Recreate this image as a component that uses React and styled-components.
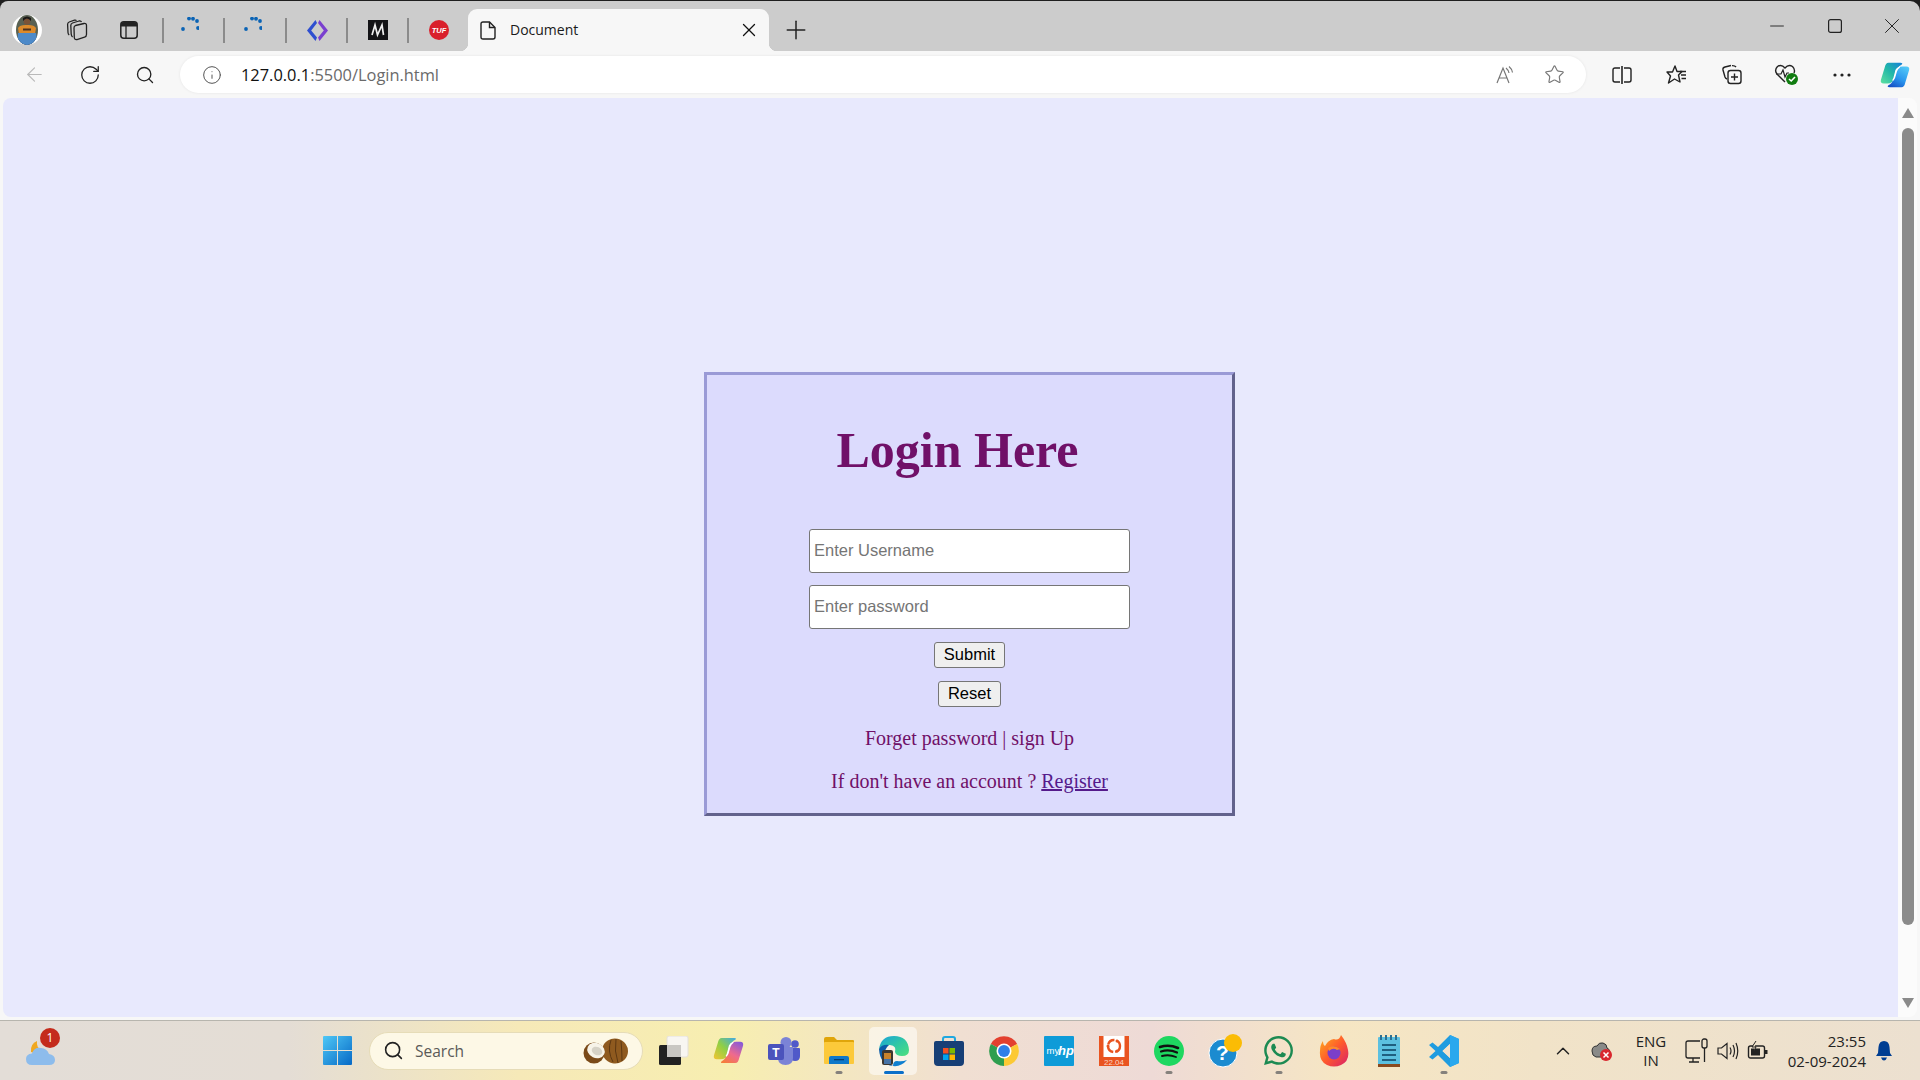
import React from "react";
import styled, { createGlobalStyle } from "styled-components";
import { ArrowLeft, RotateCw, Search, Info, Star, Plus, X, Minus, ChevronUp } from "lucide-react";
import { FaWhatsapp } from "react-icons/fa";

const Global = createGlobalStyle`
  html, body { margin: 0; padding: 0; height: 100%; overflow: hidden; background: #1e1e1e; }
  #root { height: 100%; }
`;
const UI = `"Open Sans", "Noto Sans", sans-serif`;

const Window = styled.div`display: flex; flex-direction: column; height: 100vh; width: 100%; font-family: ${UI};`;
const TabStrip = styled.header`
  display: flex; height: 50px; margin-top: 1px; padding-top: 8px; box-sizing: border-box;
  background: #cccccc; border-radius: 8px 10px 0 0; flex: none;
`;
const TabSlot = styled.div`
  width: ${p => p.$w}px; flex: none; display: flex; align-items: center; justify-content: center;
`;
const Separator = styled.span`display: block; width: 2px; height: 25px; background: #8b8b8b;`;
const ActiveTab = styled.div`
  position: relative; margin-left: 13px; width: 301px; flex: none; display: flex; align-items: center;
  background: #f7f7f7; border-radius: 9px 9px 0 0; padding: 0 9px 0 12px; box-sizing: border-box; color: #111;
  &::before, &::after { content: ""; position: absolute; bottom: 0; width: 8px; height: 8px; }
  &::before { left: -8px; background: radial-gradient(circle at 0 0, transparent 8px, #f7f7f7 8.5px); }
  &::after { right: -8px; background: radial-gradient(circle at 100% 0, transparent 8px, #f7f7f7 8.5px); }
`;
const TabTitle = styled.span`font-size: 14px; margin-left: 14px; padding-bottom: 2px; flex: 1; color: #1a1a1a;`;
const PlusSlot = styled.div`width: 54px; flex: none; display: flex; align-items: center; justify-content: center; color: #222;`;
const CaptionGroup = styled.div`margin-left: auto; display: flex; height: 34px;`;
const CaptionButton = styled.div`width: ${p => p.$w}px; display: flex; align-items: center; justify-content: center; color: #222;`;
const Toolbar = styled.nav`display: flex; align-items: center; height: 47px; padding-left: 7px; background: #f7f7f7; flex: none;`;
const ToolButton = styled.div`
  width: ${p => p.$w || 55}px; height: 47px; flex: none; display: flex; align-items: center; justify-content: center;
  color: ${p => p.$muted ? "#b9b9b9" : "#222"};
`;
const AddressBar = styled.div`
  width: 1406px; height: 37px; margin: 0 8px 0 8px; flex: none; display: flex; align-items: center; box-sizing: border-box;
  background: #fff; border-radius: 19px; padding: 0 7px 0 22px; box-shadow: 0 0 3px rgba(0,0,0,.08);
`;
const UrlIcon = styled.div`width: 20px; height: 20px; color: #555; display: flex; margin-right: 19px;`;
const Url = styled.div`flex: 1; font-size: 16.4px; color: #6a6a6a; b { font-weight: 400; color: #111; }`;
const AddressAction = styled.div`width: 49px; display: flex; justify-content: center; color: #777;`;
const PageRow = styled.div`flex: 1; display: flex; min-height: 0; padding: 0 3px 3px; background: #f7f7f7;`;
const Page = styled.main`
  flex: 1; background: #e8e9fd; border-radius: 8px 0 0 8px; padding: 274px 0 0 701px; box-sizing: border-box;
  font-family: "Liberation Serif", "Times New Roman", serif;
`;
const LoginCard = styled.section`
  width: 531px; box-sizing: border-box; border: 3px solid; border-color: #9a9ad6 #62628c #62628c #9a9ad6;
  background: #dcdbfd; display: flex; flex-direction: column; align-items: center; padding: 47px 0 20px;
`;
const Title = styled.h1`margin: 0 24px 50px 0; font-size: 50px; line-height: 57px; font-weight: 700; color: #701068;`;
const Field = styled.input`
  width: 321px; height: 44px; box-sizing: border-box; margin-bottom: ${p => p.$mb}px; padding: 0 4px 2px;
  border: 1px solid #767676; border-radius: 3px; background: #fff; outline: none;
  font-family: "Liberation Sans", Arial, sans-serif; font-size: 16.5px;
  &::placeholder { color: #757575; opacity: 1; }
`;
const ActionButton = styled.button`
  height: 26px; width: ${p => p.$w}px; padding: 0 0 2px; margin-bottom: 13px; box-sizing: border-box;
  border: 1px solid #767676; border-radius: 3px; background: #efefef; color: #000;
  font-family: "Liberation Sans", Arial, sans-serif; font-size: 16.5px;
`;
const Note = styled.p`margin: ${p => p.$mt}px 0 0; font-size: 20px; line-height: 23px; color: #701068;`;
const RegisterLink = styled.a`color: #551a8b; text-decoration: underline;`;
const Scrollbar = styled.aside`
  width: 19px; flex: none; background: #fbfbfb; border-radius: 0 8px 8px 0; display: flex; flex-direction: column;
  align-items: center; padding: 10px 0 9px; box-sizing: border-box;
`;
const ArrowUp = styled.span`width: 0; height: 0; border: 6.5px solid transparent; border-top: 0; border-bottom: 10px solid #8a8a8a;`;
const ArrowDown = styled.span`width: 0; height: 0; border: 6.5px solid transparent; border-bottom: 0; border-top: 10px solid #8a8a8a;`;
const Thumb = styled.div`flex: 1; width: 12px; margin: 10px 0 73px; background: #8b8b8b; border-radius: 6px;`;
const Taskbar = styled.footer`
  height: 60px; flex: none; box-sizing: border-box; border-top: 1px solid #b7b5ae; display: flex; align-items: center;
  background: linear-gradient(90deg, #e3ddd7 0%, #e4ddd5 15%, #f6e9b8 27%, #f7eeb0 38%, #f0dfd2 50%, #eedad6 60%, #f6e6c3 70%, #f1e3c8 80%, #ece0d0 100%);
`;
const WeatherSlot = styled.div`width: 310px; flex: none; padding-left: 24px; box-sizing: border-box;`;
const WeatherWrap = styled.div`position: relative; width: 34px; height: 34px;`;
const Badge = styled.span`
  position: absolute; left: 16px; top: -6px; width: 20px; height: 20px; border-radius: 50%; background: #c42b1c; color: #fff;
  font-size: 12px; line-height: 20px; text-align: center;
`;
const TaskSlot = styled.div`
  position: relative; width: 55px; height: 48px; flex: none; display: flex; align-items: center; justify-content: center;
  &[data-active="true"]::before { content: ""; position: absolute; left: 3px; right: 4px; top: 0; bottom: 0; background: rgba(255,255,255,.55); border-radius: 5px; }
  svg { position: relative; }
`;
const RunDot = styled.span`
  position: absolute; left: 50%; bottom: 1px; height: 3px; border-radius: 2px; transform: translateX(-50%);
  width: ${p => p.$active ? 20 : 7}px; background: ${p => p.$active ? "#0b6fc9" : "#85817c"};
`;
const SearchPill = styled.div`
  width: 274px; height: 38px; margin: 0 3px 0 4px; flex: none; box-sizing: border-box; display: flex; align-items: center;
  background: #fdf8e6; border: 1px solid #e6dcb8; border-radius: 19px; padding: 0 13px 0 13px; color: #222;
`;
const SearchText = styled.span`flex: 1; font-size: 15.5px; color: #5a5a58; margin-left: 11px;`;
const Tray = styled.div`margin-left: auto; display: flex; align-items: center; height: 100%; padding-right: 18px; color: #222;`;
const TraySlot = styled.div`width: ${p => p.$w}px; flex: none; display: flex; align-items: center; justify-content: center;`;
const Lang = styled.div`text-align: center; font-size: 15px; line-height: 19px; color: #222;`;
const Clock = styled.div`text-align: right; font-size: 15px; line-height: 20px; color: #222; width: 93px; flex: none;`;

const Avatar = () => (
  <svg width="30" height="30" viewBox="0 0 30 30">
    <defs><clipPath id="av"><ellipse cx="15" cy="15" rx="11" ry="15" /></clipPath></defs>
    <circle cx="15" cy="15" r="15" fill="#fff" />
    <g clipPath="url(#av)">
      <rect width="30" height="30" fill="#596153" />
      <rect y="24" width="30" height="6" fill="#39455a" />
      <circle cx="15" cy="6.5" r="3.3" fill="#7a5236" />
      <path d="M11 6 q4 -5 8 0 l0 -3 q-4 -3 -8 0z" fill="#1b1817" />
      <path d="M7 19 L6 13 Q8 9.5 15 10 Q22 9.5 24 13 L23 19 Z" fill="#dc8a2b" />
      <path d="M6 18 H24 L26 30 H5Z" fill="#4d8ac9" />
      <rect x="11" y="13.5" width="8" height="2" fill="#4a3020" />
    </g>
  </svg>
);
const StackIcon = () => (
  <svg width="22" height="22" viewBox="0 0 22 22" fill="none" stroke="#222" strokeWidth="1.3">
    <path d="M9.5 6.5 L18 4.5 Q20.5 4.2 20.5 6.5 V15.5 Q20.5 17.5 18.5 18.2 L11 20.5 Q8.5 21 8.3 18.5 L8 9 Q8 7 9.5 6.5Z" />
    <path d="M15.5 3 Q14.8 1.5 13 2 L6.5 4 Q4.7 4.6 4.8 6.5 L5.2 15 Q5.3 17 6.6 18" />
    <path d="M10.5 1.6 Q9.8 .8 8.5 1.2 L3.2 3 Q1.5 3.6 1.6 5.5 L2 13.5 Q2.1 15.2 3.2 16" />
  </svg>
);
const SideTabs = () => (
  <svg width="18" height="18" viewBox="0 0 18 18" fill="none">
    <rect x=".8" y=".8" width="16.4" height="16.4" rx="3" stroke="#222" strokeWidth="1.5" />
    <path d="M1 4 Q1 1 4 1 H14 Q17 1 17 4 V5.5 H1Z" fill="#222" />
    <path d="M6 5 V17" stroke="#222" strokeWidth="1.3" />
  </svg>
);
const Dots = () => (
  <svg width="18" height="26" viewBox="0 0 18 26" fill="#0a63b5">
    <circle cx="2" cy="12" r="1.9" /><circle cx="17" cy="11" r="1.9" /><circle cx="16" cy="4" r="1.9" />
    <circle cx="12" cy="1.8" r="1.9" /><circle cx="8" cy="1.6" r="1.9" />
  </svg>
);
const CodeLogo = () => (
  <svg width="21" height="21" viewBox="0 0 21 21">
    <path d="M8.5 0 L10 3 L4.2 10.5 L10 17.5 L8.5 21 L0 10.5Z" fill="#2f4fd0" />
    <path d="M12.5 0 L21 10.5 L12.5 21 L11 17.5 L16.8 10.5 L11 3Z" fill="#7a3fcf" />
  </svg>
);
const MLogo = () => (
  <svg width="20" height="20" viewBox="0 0 20 20">
    <rect width="20" height="20" fill="#131316" />
    <path d="M4 15 L7 5 L9.5 15 L14 5 L15.5 15" fill="none" stroke="#eee" strokeWidth="1.7" />
  </svg>
);
const TufLogo = () => (
  <svg width="20" height="20" viewBox="0 0 20 20">
    <circle cx="10" cy="10" r="10" fill="#d9202c" />
    <text x="10" y="12.5" textAnchor="middle" fontFamily="Liberation Sans" fontSize="7.5" fontWeight="700" fontStyle="italic" fill="#fff">TUF</text>
  </svg>
);
const FileIcon = () => (
  <svg width="16" height="19" viewBox="0 0 16 19" fill="none" stroke="#222" strokeWidth="1.4">
    <path d="M3 1 H9.5 L15 6.5 V16 Q15 18 13 18 H3 Q1 18 1 16 V3 Q1 1 3 1Z" />
    <path d="M9.5 1 V6.5 H15" />
  </svg>
);
const ReadAloud = () => (
  <svg width="20" height="20" viewBox="0 0 20 20" fill="none" stroke="#777" strokeWidth="1.2">
    <path d="M1 18 L7 3 L13 18 M3.2 13 H11" />
    <path d="M10 3 Q12.5 5 13 8 M13 1.5 Q16 4 16.5 7.5" />
  </svg>
);
const SplitIcon = () => (
  <svg width="20" height="20" viewBox="0 0 20 20" fill="none" stroke="#222" strokeWidth="1.4">
    <path d="M8 3 H3 Q1 3 1 5 V15 Q1 17 3 17 H8 M12 3 H17 Q19 3 19 5 V15 Q19 17 17 17 H12" />
    <path d="M10 1 V19" strokeWidth="1.6" />
  </svg>
);
const FavIcon = () => (
  <svg width="21" height="20" viewBox="0 0 21 20" fill="none" stroke="#222" strokeWidth="1.4">
    <path d="M9 1 L11 6.5 H16 L12.5 10 L14 17 L8.5 14 L2.5 18 L4.5 11 L1 7 H6.5Z" strokeLinejoin="round" />
    <path d="M14 6.5 H20 M15 10 H20 M15.5 13.5 H20" />
  </svg>
);
const CollectionsIcon = () => (
  <svg width="21" height="21" viewBox="0 0 21 21" fill="none" stroke="#222" strokeWidth="1.4">
    <path d="M10 1.5 L4 3 Q1.5 3.6 2 6 L4 13 Q4.5 14.5 6 15" />
    <path d="M15 3 Q14 1.5 11 1.6" />
    <rect x="7" y="6.5" width="13" height="13" rx="2.5" />
    <path d="M13.5 9.5 V16.5 M10 13 H17" />
  </svg>
);
const HeartIcon = () => (
  <svg width="26" height="24" viewBox="0 0 26 24">
    <path d="M11 19 L3 11 Q0 7 3.5 3.5 Q7.5 1 11 5 Q14.5 1 18.5 3.5 Q21.5 6.5 20 10" fill="none" stroke="#222" strokeWidth="1.4" />
    <path d="M2 11 H7 L9 7 L11 14 L13 10 H15" fill="none" stroke="#222" strokeWidth="1.2" />
    <circle cx="18" cy="16" r="6" fill="#107c10" />
    <path d="M15 16 L17.2 18 L21 14" fill="none" stroke="#fff" strokeWidth="1.6" />
  </svg>
);
const MoreIcon = () => (
  <svg width="18" height="4" viewBox="0 0 18 4" fill="#222"><circle cx="2" cy="2" r="1.6" /><circle cx="9" cy="2" r="1.6" /><circle cx="16" cy="2" r="1.6" /></svg>
);
const CopilotIcon = ({ id, size, rainbow }) => (
  <svg width={size} height={size} viewBox="0 0 32 32">
    <defs>
      <linearGradient id={`${id}a`} x1="0" y1="1" x2="1" y2="0">
        <stop offset="0" stopColor={rainbow ? "#f4c430" : "#5fe0a0"} />
        <stop offset=".5" stopColor={rainbow ? "#8fcf45" : "#22b8a8"} />
        <stop offset="1" stopColor={rainbow ? "#3fa8e8" : "#1580d8"} />
      </linearGradient>
      <linearGradient id={`${id}b`} x1=".8" y1="0" x2=".2" y2="1">
        <stop offset="0" stopColor={rainbow ? "#8a5bd6" : "#52c8f7"} />
        <stop offset=".55" stopColor={rainbow ? "#ef6a8e" : "#2a96ee"} />
        <stop offset="1" stopColor={rainbow ? "#f57c3b" : "#1650c5"} />
      </linearGradient>
    </defs>
    <path d="M9 3 H22 Q25 3 23 5 Q19 7 18 11 L15.5 20 Q13 25 8 25 H4 Q0 25 1 21 L5 8 Q6 3 9 3Z" fill={`url(#${id}a)`} />
    <path d="M23 29 H10 Q7 29 9 27 Q13 25 14 21 L16.5 12 Q19 7 24 7 H28 Q32 7 31 11 L27 24 Q26 29 23 29Z" fill={`url(#${id}b)`} />
    <path d="M21 7.5 Q18.5 9 17.5 12 L15.5 19 Q14.5 21 13.5 22 Q15 20 15.5 17 L17 11 Q18 8.5 21 7.5Z" fill="#fff" stroke="#fff" strokeWidth="1.2" />
  </svg>
);
const WeatherIcon = () => (
  <svg width="34" height="34" viewBox="0 0 34 34">
    <path d="M13 7 Q6 10 7 18 Q12 20 18 16 Q12 14 13 7Z" fill="#f0a820" />
    <path d="M8 31 Q2 31 2 25 Q2 20 8 19.5 Q10 13 17 14 Q23 14.5 25 20 Q31 21 31 26 Q31 31 25 31Z" fill="#8dbcec" />
  </svg>
);
const WinLogo = () => (
  <svg width="29" height="29" viewBox="0 0 29 29">
    <defs><linearGradient id="win" x1="0" y1="0" x2="1" y2="1"><stop offset="0" stopColor="#4fc8f6" /><stop offset="1" stopColor="#0669c6" /></linearGradient></defs>
    <path d="M0 1 Q0 0 1 0 H14 V14 H0Z M15 0 H28 Q29 0 29 1 V14 H15Z M0 15 H14 V29 H1 Q0 29 0 28Z M15 15 H29 V28 Q29 29 28 29 H15Z" fill="url(#win)" />
  </svg>
);
const Coconut = () => (
  <svg width="46" height="26" viewBox="0 0 46 26">
    <ellipse cx="32" cy="13" rx="13" ry="12.5" fill="#8f5a1f" transform="rotate(12 32 13)" />
    <path d="M28 2 Q24 13 30 24 M33 1 Q31 13 35 25 M38 3 Q39 13 39 23" stroke="#5e3812" fill="none" strokeWidth="1" />
    <circle cx="11" cy="15" r="10.5" fill="#7a4a18" />
    <ellipse cx="13" cy="12.5" rx="9" ry="7.5" fill="#f7f3e8" transform="rotate(25 13 12.5)" />
    <ellipse cx="14" cy="13" rx="5.5" ry="4" fill="#d6d2c6" transform="rotate(25 14 13)" />
  </svg>
);
const TaskView = () => (
  <svg width="30" height="29" viewBox="0 0 30 29">
    <rect x="8" y="0" width="21" height="21" rx="2" fill="#f8f6f2" stroke="#e4e0da" />
    <rect x="0" y="9" width="22" height="20" rx="1.5" fill="#222" />
    <rect x="8" y="9" width="14" height="12" fill="#c9c7c3" />
  </svg>
);
const Teams = () => (
  <svg width="32" height="28" viewBox="0 0 32 28">
    <circle cx="18" cy="5.5" r="5.5" fill="#7b83d6" />
    <circle cx="27" cy="7" r="3.8" fill="#5059c9" />
    <path d="M22 11 H31 Q32 11 32 12 V19 Q32 24 27 24 Q23 24 22 21Z" fill="#5059c9" />
    <path d="M10 10 H25 V21 Q25 28 17.5 28 Q10 28 10 21Z" fill="#7b83d6" />
    <rect x="0" y="7" width="16" height="16" rx="2" fill="#4b53bc" />
    <text x="8" y="19.5" textAnchor="middle" fontFamily="Liberation Sans" fontWeight="700" fontSize="12" fill="#fff">T</text>
  </svg>
);
const Explorer = () => (
  <svg width="30" height="27" viewBox="0 0 30 27">
    <path d="M0 2 Q0 0 2 0 H10 L13 3 H29 Q30 3 30 4 V10 H0Z" fill="#e0a50a" />
    <rect x="0" y="5" width="30" height="22" rx="1" fill="#fcc93a" />
    <path d="M5 27 V21 Q5 19 7 19 H23 Q25 19 25 21 V27Z" fill="#0f78c9" />
    <rect x="10" y="22" width="10" height="1.3" fill="#073f72" />
  </svg>
);
const Edge = () => (
  <svg width="32" height="32" viewBox="0 0 32 32">
    <defs>
      <linearGradient id="edg" x1="0" y1="0" x2="1" y2="1"><stop offset="0" stopColor="#1aa0dd" /><stop offset=".5" stopColor="#2fc7a5" /><stop offset="1" stopColor="#4ee07e" /></linearGradient>
    </defs>
    <path d="M1 14 Q3 1 16 1 Q30 1 31 15 Q31 21 24 21 Q18 21 17 17 Q19 11 12 10 Q4 10 1 14Z" fill="url(#edg)" />
    <path d="M1 14 Q4 9 11 10 Q6 14 7 21 Q8 28 15 31 Q2 30 1 14Z" fill="#0c5ba8" />
    <path d="M15 31 Q23 32 29 25 Q24 27 19 26 Q15 26 15 31Z" fill="#0f7fd0" />
    <rect x="4" y="15" width="11" height="15" rx="2" fill="#3b3630" />
    <rect x="6" y="18" width="7" height="6" fill="#c9822b" />
    <rect x="6" y="24" width="7" height="5" fill="#4672a6" />
  </svg>
);
const Store = () => (
  <svg width="30" height="30" viewBox="0 0 30 30">
    <path d="M9 6 V3 Q9 1 11 1 H19 Q21 1 21 3 V6" fill="none" stroke="#1fa8e0" strokeWidth="2" />
    <path d="M0 7 Q0 5 2 5 H28 Q30 5 30 7 V26 Q30 30 26 30 H4 Q0 30 0 26Z" fill="#173f76" />
    <rect x="9" y="12" width="5.5" height="5.5" fill="#f25022" /><rect x="15.5" y="12" width="5.5" height="5.5" fill="#7fba00" />
    <rect x="9" y="18.5" width="5.5" height="5.5" fill="#00a4ef" /><rect x="15.5" y="18.5" width="5.5" height="5.5" fill="#ffb900" />
  </svg>
);
const Chrome = () => (
  <svg width="30" height="30" viewBox="0 0 32 32">
    <path d="M16 16 L2 8.5 A16 16 0 0 1 30 8.5Z" fill="#e3402f" />
    <path d="M16 16 L30 8.5 A16 16 0 0 1 16 32Z" fill="#fcc934" />
    <path d="M16 16 L16 32 A16 16 0 0 1 2 8.5Z" fill="#2f9e4f" />
    <circle cx="16" cy="16" r="8" fill="#fff" /><circle cx="16" cy="16" r="6.3" fill="#2f7fe8" />
  </svg>
);
const MyHp = () => (
  <svg width="30" height="30" viewBox="0 0 30 30">
    <rect width="30" height="30" rx="1" fill="#0e9bd8" />
    <text x="2.5" y="18" fontFamily="Liberation Sans" fontSize="9.5" fill="#fff">my</text>
    <text x="14" y="19" fontFamily="Liberation Sans" fontSize="13" fontWeight="700" fontStyle="italic" fill="#fff">hp</text>
  </svg>
);
const Ubuntu = () => (
  <svg width="30" height="30" viewBox="0 0 30 30">
    <rect width="30" height="30" fill="#e95420" />
    <rect x="4.5" y="0" width="21" height="21" fill="#fff" />
    <circle cx="15" cy="10" r="6" fill="none" stroke="#e95420" strokeWidth="2.4" strokeDasharray="8 2" />
    <circle cx="9" cy="10" r="1.5" fill="#e95420" /><circle cx="18" cy="5" r="1.5" fill="#e95420" /><circle cx="18" cy="15" r="1.5" fill="#e95420" />
    <text x="15" y="28.5" textAnchor="middle" fontFamily="Liberation Sans" fontSize="8" fill="#fbd8c9">22.04</text>
  </svg>
);
const Spotify = () => (
  <svg width="30" height="30" viewBox="0 0 30 30" fill="none" stroke="#111" strokeLinecap="round">
    <circle cx="15" cy="15" r="15" fill="#1ed760" stroke="none" />
    <path d="M6 11 Q15 8 24 12" strokeWidth="2.6" /><path d="M7 15.5 Q15 13 23 16.5" strokeWidth="2.2" /><path d="M8 20 Q15 18 22 21" strokeWidth="1.9" />
  </svg>
);
const Help = () => (
  <svg width="38" height="34" viewBox="-4 0 38 34">
    <circle cx="14" cy="19" r="14" fill="#1b8bd0" stroke="#fff" strokeWidth="1" />
    <text x="13.5" y="26" textAnchor="middle" fontFamily="Liberation Sans" fontWeight="700" fontSize="21" fill="#fff">?</text>
    <circle cx="24" cy="9" r="9" fill="#fbbc05" />
  </svg>
);
const Firefox = () => (
  <svg width="30" height="32" viewBox="0 0 30 32">
    <defs><linearGradient id="ff" x1="0" y1="0" x2="1" y2="1"><stop offset="0" stopColor="#ffb31a" /><stop offset=".5" stopColor="#ff5a2c" /><stop offset="1" stopColor="#d71f6b" /></linearGradient></defs>
    <path d="M15 4 Q20 6 22 0 Q28 8 29 15 Q31 26 22 30 Q15 33 8 30 Q0 26 1 16 Q1 10 4 6 Q4 10 6 11 Q9 5 15 4Z" fill="url(#ff)" />
    <circle cx="15" cy="18" r="6.5" fill="#7a3fc9" /><path d="M9 13 Q15 9 21 14 L18 15 Q14 12 10 16Z" fill="#ff8a2a" />
  </svg>
);
const Notepad = () => (
  <svg width="22" height="32" viewBox="0 0 22 32">
    <rect y="2" width="22" height="30" rx="1" fill="#5cc0e0" />
    <rect y="29" width="22" height="3" fill="#8a4a1e" />
    <g fill="#2a6f92"><rect x="2" y="0" width="2" height="5" /><rect x="7" y="0" width="2" height="5" /><rect x="12" y="0" width="2" height="5" /><rect x="17" y="0" width="2" height="5" /></g>
    <g fill="#1f5f80"><rect x="4" y="9" width="14" height="2" /><rect x="4" y="14" width="14" height="2" /><rect x="4" y="19" width="14" height="2" /><rect x="4" y="24" width="14" height="2" /></g>
  </svg>
);
const VsCode = () => (
  <svg width="30" height="32" viewBox="0 0 30 32">
    <path fillRule="evenodd" d="M21 0 L30 4 V28 L21 32 L9 20 L3.5 24.5 L0 22 L6.5 16 L0 10 L3.5 7.5 L9 12Z M21 9 L13.5 16 L21 23Z" fill="#1f9ce0" />
    <path d="M21 0 L30 4 V28 L21 32Z M21 9 L21 23" fill="#2aa8ee" />
    <path d="M21 9 L13.5 16 L21 23Z" fill="#f3e3cb" />
  </svg>
);
const CloudError = () => (
  <svg width="22" height="22" viewBox="0 0 22 22">
    <path d="M5 17 Q1 16 1 11 Q1 6 6 6 Q8 2 12 3 Q16 4 16 8 Q19 9 19 13 L12 17Z" fill="#8a8a88" stroke="#333" strokeWidth="1" />
    <circle cx="15" cy="15" r="6" fill="#d9272e" />
    <path d="M12.5 12.5 L17.5 17.5 M17.5 12.5 L12.5 17.5" stroke="#fff" strokeWidth="1.5" />
  </svg>
);
const MonitorPlug = () => (
  <svg width="24" height="26" viewBox="0 0 24 26" fill="none" stroke="#222" strokeWidth="1.3">
    <path d="M15 3 H3 Q1 3 1 5 V18 Q1 20 3 20 H15" /><path d="M8 20 V24 M4 24 H14" />
    <rect x="17" y="1" width="5" height="9" rx="2" /><path d="M19.5 10 V24" />
  </svg>
);
const SpeakerIcon = () => (
  <svg width="22" height="20" viewBox="0 0 22 20" fill="none" stroke="#222" strokeWidth="1.2">
    <path d="M1 7 H4.5 L10 2.5 V17.5 L4.5 13 H1Z" /><path d="M13 6.5 Q15 10 13 13.5 M16 4 Q19 10 16 16 M19 2 Q22.5 10 19 18" />
  </svg>
);
const BatteryIcon = () => (
  <svg width="22" height="20" viewBox="0 0 22 20">
    <rect x="1.5" y="5" width="16" height="12" rx="2" fill="none" stroke="#222" strokeWidth="1.4" />
    <rect x="18" y="9" width="2.5" height="4" fill="#222" /><rect x="4" y="7.5" width="9" height="7" fill="#222" />
    <path d="M9 0 L5 6 H9 L7 10" fill="#f1e3c8" stroke="#222" strokeWidth="1" />
  </svg>
);
const BellIcon = () => (
  <svg width="16" height="20" viewBox="0 0 16 20" fill="#003e92">
    <path d="M8 0 Q13 0 13.5 6 L14 12 L16 15 H0 L2 12 L2.5 6 Q3 0 8 0Z" /><path d="M5 16.5 H11 Q10 19.5 8 19.5 Q6 19.5 5 16.5Z" />
  </svg>
);

const pins = [
  { w: 54, el: <Avatar /> }, { w: 46, el: <StackIcon /> }, { w: 58, el: <SideTabs /> }, { w: 10, el: <Separator /> },
  { w: 44, el: <Dots /> }, { w: 24, el: <Separator /> }, { w: 33, el: <Dots /> }, { w: 34, el: <Separator /> },
  { w: 28, el: <CodeLogo /> }, { w: 32, el: <Separator /> }, { w: 30, el: <MLogo /> }, { w: 30, el: <Separator /> }, { w: 32, el: <TufLogo /> },
];
const tasks = [
  { el: <CopilotIcon id="tc" size={31} rainbow /> }, { el: <Teams /> }, { el: <Explorer />, run: true },
  { el: <Edge />, run: true, active: true }, { el: <Store /> }, { el: <Chrome /> }, { el: <MyHp /> }, { el: <Ubuntu /> },
  { el: <Spotify />, run: true }, { el: <Help /> }, { el: <FaWhatsapp size={33} color="#1c8a52" />, run: true },
  { el: <Firefox /> }, { el: <Notepad /> }, { el: <VsCode />, run: true },
];

export default function App() {
  return (
    <Window>
      <Global />
      <TabStrip>
        {pins.map((p, i) => <TabSlot key={i} $w={p.w}>{p.el}</TabSlot>)}
        <ActiveTab>
          <FileIcon />
          <TabTitle>Document</TabTitle>
          <X size={22} strokeWidth={1.4} />
        </ActiveTab>
        <PlusSlot><Plus size={30} strokeWidth={1.2} /></PlusSlot>
        <CaptionGroup>
          <CaptionButton $w={58}><Minus size={22} strokeWidth={1} /></CaptionButton>
          <CaptionButton $w={58}><svg width="14" height="14" viewBox="0 0 14 14" fill="none" stroke="#222" strokeWidth="1.2"><rect x=".6" y=".6" width="12.8" height="12.8" rx="2" /></svg></CaptionButton>
          <CaptionButton $w={56}><X size={26} strokeWidth={.9} /></CaptionButton>
        </CaptionGroup>
      </TabStrip>
      <Toolbar>
        <ToolButton $muted><ArrowLeft size={23} strokeWidth={1.2} /></ToolButton>
        <ToolButton><RotateCw size={22} strokeWidth={1.4} /></ToolButton>
        <ToolButton><Search size={20} strokeWidth={1.6} /></ToolButton>
        <AddressBar>
          <UrlIcon><Info size={20} strokeWidth={1.2} /></UrlIcon>
          <Url><b>127.0.0.1</b>:5500/Login.html</Url>
          <AddressAction><ReadAloud /></AddressAction>
          <AddressAction><Star size={21} strokeWidth={1.3} /></AddressAction>
        </AddressBar>
        <ToolButton><SplitIcon /></ToolButton>
        <ToolButton><FavIcon /></ToolButton>
        <ToolButton><CollectionsIcon /></ToolButton>
        <ToolButton><HeartIcon /></ToolButton>
        <ToolButton><MoreIcon /></ToolButton>
        <ToolButton $w={51}><CopilotIcon id="bc" size={30} /></ToolButton>
      </Toolbar>
      <PageRow>
        <Page>
          <LoginCard>
            <Title>Login Here</Title>
            <Field placeholder="Enter Username" $mb={12} />
            <Field placeholder="Enter password" type="password" $mb={13} />
            <ActionButton $w={71}>Submit</ActionButton>
            <ActionButton $w={63}>Reset</ActionButton>
            <Note $mt={7}>Forget password | sign Up</Note>
            <Note $mt={20}>If don't have an account ? <RegisterLink href="#">Register</RegisterLink></Note>
          </LoginCard>
        </Page>
        <Scrollbar><ArrowUp /><Thumb /><ArrowDown /></Scrollbar>
      </PageRow>
      <Taskbar>
        <WeatherSlot><WeatherWrap><WeatherIcon /><Badge>1</Badge></WeatherWrap></WeatherSlot>
        <TaskSlot><WinLogo /></TaskSlot>
        <SearchPill>
          <Search size={21} strokeWidth={1.8} />
          <SearchText>Search</SearchText>
          <Coconut />
        </SearchPill>
        <TaskSlot><TaskView /></TaskSlot>
        {tasks.map((t, i) => (
          <TaskSlot key={i} data-active={t.active ? "true" : "false"}>
            {t.el}
            {t.run && <RunDot $active={t.active} />}
          </TaskSlot>
        ))}
        <Tray>
          <TraySlot $w={40}><ChevronUp size={22} strokeWidth={1.6} /></TraySlot>
          <TraySlot $w={38}><CloudError /></TraySlot>
          <TraySlot $w={60}><Lang>ENG<br />IN</Lang></TraySlot>
          <TraySlot $w={32}><MonitorPlug /></TraySlot>
          <TraySlot $w={30}><SpeakerIcon /></TraySlot>
          <TraySlot $w={30}><BatteryIcon /></TraySlot>
          <Clock>23:55<br />02-09-2024</Clock>
          <TraySlot $w={36}><BellIcon /></TraySlot>
        </Tray>
      </Taskbar>
    </Window>
  );
}
